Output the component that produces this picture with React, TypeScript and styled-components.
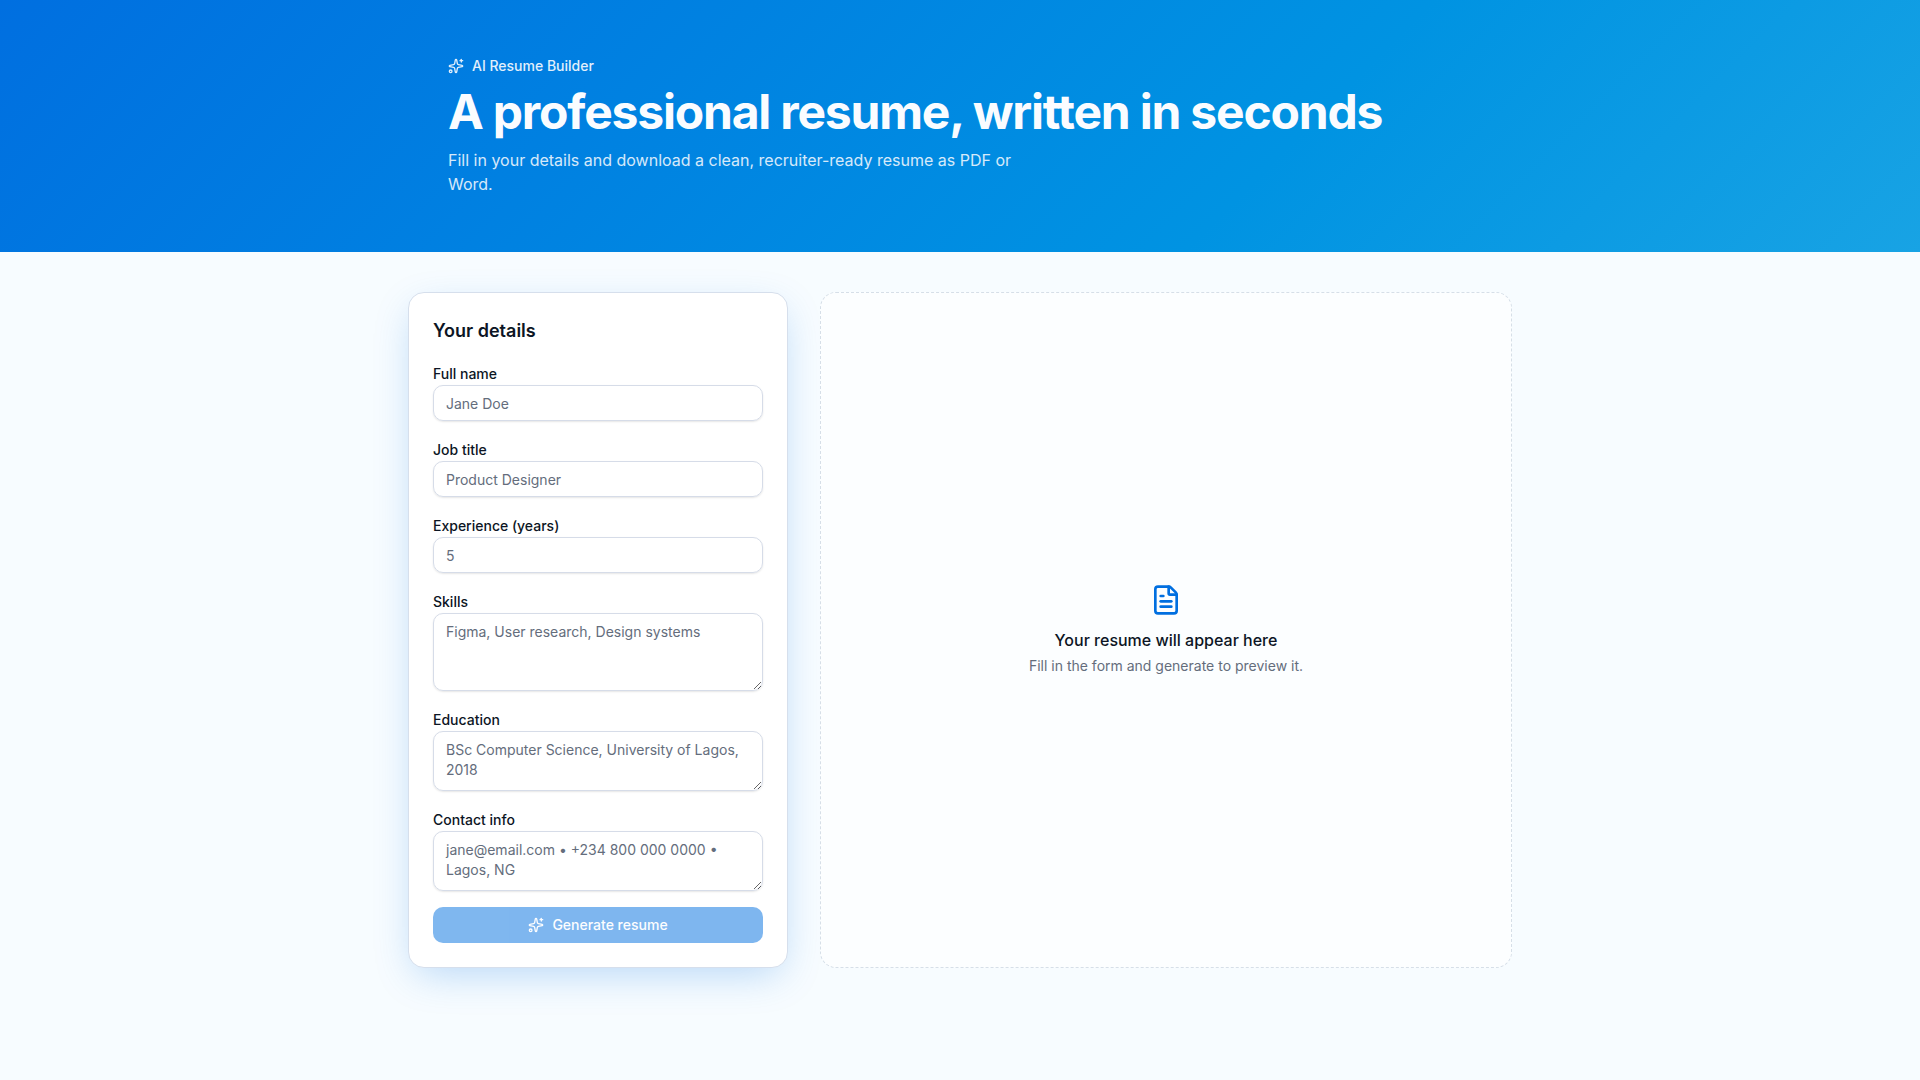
import React from "react";
import styled, { createGlobalStyle, css } from "styled-components";
import { FileText, Sparkles } from "lucide-react";

const GlobalStyle = createGlobalStyle`
  *, *::before, *::after {
    box-sizing: border-box;
  }

  body {
    margin: 0;
    background: #f7fcff;
    color: #0c1524;
    font-family: Inter, "Liberation Sans", sans-serif;
    font-size: 16px;
    line-height: 24px;
  }
`;

const Page = styled.div`
  min-height: 100vh;
`;

const Hero = styled.header`
  padding: 56px 24px;
  color: #fafcff;
  background: linear-gradient(135deg, #006fe0 0%, #0093e2 66%, #18a3e4 100%);
`;

const HeroInner = styled.div`
  max-width: 1024px;
  margin: 0 auto;
  display: flex;
  flex-direction: column;
  gap: 12px;
`;

const Eyebrow = styled.div`
  display: flex;
  align-items: center;
  gap: 8px;
  font-size: 14px;
  line-height: 20px;
  font-weight: 500;
  opacity: 0.9;
`;

const HeroTitle = styled.h1`
  margin: 0;
  font-size: 48px;
  line-height: 48px;
  font-weight: 700;
  letter-spacing: -0.025em;
`;

const HeroText = styled.p`
  margin: 0;
  max-width: 576px;
  opacity: 0.85;
`;

const Main = styled.main`
  max-width: 1152px;
  margin: 0 auto;
  padding: 40px 24px;
  display: grid;
  grid-template-columns: 380px 1fr;
  gap: 32px;

  @media (max-width: 1023px) {
    grid-template-columns: 1fr;
  }
`;

const DetailsForm = styled.form`
  display: flex;
  flex-direction: column;
  gap: 16px;
  padding: 24px;
  border: 1px solid #d6dfec;
  border-radius: 16px;
  background: #ffffff;
  box-shadow: 0 12px 40px -8px rgba(0, 111, 224, 0.28);
`;

const FormTitle = styled.h2`
  margin: 0;
  font-size: 18px;
  line-height: 28px;
  font-weight: 600;
`;

const FieldGroup = styled.div``;

const Label = styled.label`
  font-size: 14px;
  line-height: 14px;
  font-weight: 500;
`;

const controlStyle = css`
  display: block;
  width: 100%;
  padding: 8px 12px;
  border: 1px solid #d6dce8;
  border-radius: 10px;
  background: transparent;
  color: inherit;
  font-family: inherit;
  font-size: 14px;
  line-height: 20px;
  box-shadow: 0 1px 2px rgba(0, 0, 0, 0.1);

  &::placeholder {
    color: #646d7c;
    opacity: 1;
  }

  &:focus-visible {
    outline: 2px solid #006fe0;
  }
`;

const Input = styled.input`
  ${controlStyle}
  height: 36px;
`;

const TextArea = styled.textarea`
  ${controlStyle}
  min-height: 60px;
  resize: vertical;
`;

const SubmitButton = styled.button`
  display: flex;
  align-items: center;
  justify-content: center;
  gap: 8px;
  height: 36px;
  border: 0;
  border-radius: 10px;
  background: #006fe0;
  color: #fafcff;
  font-family: inherit;
  font-size: 14px;
  line-height: 20px;
  font-weight: 500;

  &:disabled {
    opacity: 0.5;
  }
`;

const Preview = styled.section`
  display: flex;
  flex-direction: column;
  align-items: center;
  justify-content: center;
  padding: 24px;
  border: 1px dashed #d6dfe8;
  border-radius: 16px;
  background: #fcfeff;
  text-align: center;
`;

const PreviewTitle = styled.p`
  margin: 12px 0 4px;
  font-weight: 500;
`;

const PreviewText = styled.p`
  margin: 0;
  color: #646d7c;
  font-size: 14px;
  line-height: 20px;
`;

type FieldSpec = {
  id: string;
  label: string;
  placeholder: string;
  rows?: number;
};

const fields: FieldSpec[] = [
  { id: "name", label: "Full name", placeholder: "Jane Doe" },
  { id: "title", label: "Job title", placeholder: "Product Designer" },
  { id: "experience", label: "Experience (years)", placeholder: "5" },
  { id: "skills", label: "Skills", placeholder: "Figma, User research, Design systems", rows: 3 },
  {
    id: "education",
    label: "Education",
    placeholder: "BSc Computer Science, University of Lagos, 2018",
    rows: 2,
  },
  {
    id: "contact",
    label: "Contact info",
    placeholder: "jane@email.com • +234 800 000 0000 • Lagos, NG",
    rows: 2,
  },
];

function Field({ id, label, placeholder, rows }: FieldSpec) {
  return (
    <FieldGroup>
      <Label htmlFor={id}>{label}</Label>
      {rows ? (
        <TextArea id={id} name={id} rows={rows} placeholder={placeholder} />
      ) : (
        <Input id={id} name={id} placeholder={placeholder} />
      )}
    </FieldGroup>
  );
}

export default function App() {
  return (
    <Page>
      <GlobalStyle />
      <Hero>
        <HeroInner>
          <Eyebrow>
            <Sparkles size={16} aria-hidden="true" />
            AI Resume Builder
          </Eyebrow>
          <HeroTitle>A professional resume, written in seconds</HeroTitle>
          <HeroText>
            Fill in your details and download a clean, recruiter-ready resume as PDF or Word.
          </HeroText>
        </HeroInner>
      </Hero>
      <Main>
        <DetailsForm>
          <FormTitle>Your details</FormTitle>
          {fields.map((field) => (
            <Field key={field.id} {...field} />
          ))}
          <SubmitButton type="submit" disabled>
            <Sparkles size={16} aria-hidden="true" />
            Generate resume
          </SubmitButton>
        </DetailsForm>
        <Preview>
          <FileText size={32} color="#006fe0" aria-hidden="true" />
          <PreviewTitle>Your resume will appear here</PreviewTitle>
          <PreviewText>Fill in the form and generate to preview it.</PreviewText>
        </Preview>
      </Main>
    </Page>
  );
}
